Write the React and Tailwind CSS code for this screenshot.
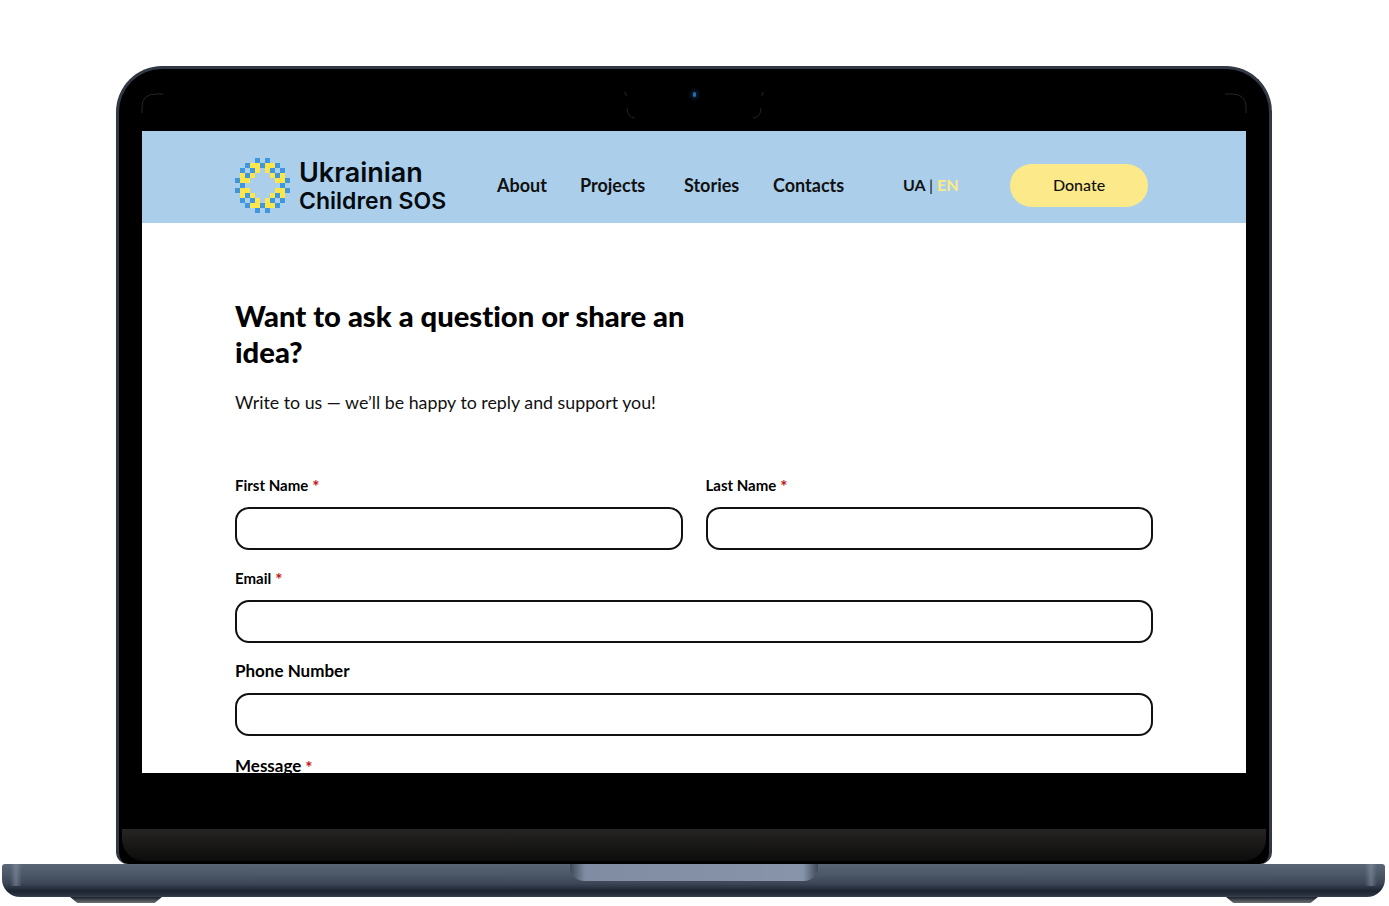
import React from "react";

// pixel logo: . empty, 1 blue, 2 yellow
const logoRows = [
  "....1.1....",
  "..1221221..",
  ".1.12.21.1.",
  ".212...212.",
  "122.....221",
  ".1.......1.",
  "122.....221",
  ".212...212.",
  ".1.12.21.1.",
  "..1221221..",
  "....1.1....",
];

const Logo = () => (
  <svg width="55" height="55" viewBox="0 0 55 55" className="shrink-0">
    {logoRows.map((row, y) =>
      row.split("").map((cell, x) =>
        cell === "." ? null : (
          <rect key={`${x}-${y}`} x={x * 5} y={y * 5} width="5" height="5" fill={cell === "1" ? "#3f97e0" : "#fde64b"} />
        )
      )
    )}
  </svg>
);

const Field = ({ label, required, labelClass = "text-[15px]", className = "" }) => (
  <div className={className}>
    <div className={`h-[22px] leading-[22px] font-bold text-black ${labelClass}`}>
      {label}
      {required && <span className="ml-[4px] align-[-2px] text-[17px] leading-none text-[#c01818]">*</span>}
    </div>
    <div className="mt-[11px] h-[43px] rounded-[14px] border-2 border-[#111] bg-white" />
  </div>
);

const Foot = () => (
  <div className="h-[6px] w-[92px] bg-gradient-to-b from-[#1b212b] via-[#454a52] to-[#6d7075] [clip-path:polygon(0_0,100%_0,92%_100%,8%_100%)]" />
);

// faint arcs on the black bezel
const BezelLines = () => (
  <svg width="1150" height="60" viewBox="0 0 1150 60" fill="none" className="absolute left-0 top-0">
    <path d="M23 44 V38 Q23 25 37 25 H44" stroke="#262626" />
    <path d="M1127 44 V38 Q1127 25 1113 25 H1106" stroke="#262626" />
    <path d="M505 24 H507 V27" stroke="#222" />
    <path d="M508 39 Q508 48 516 49" stroke="#222" />
    <path d="M645 24 H643 V27" stroke="#222" />
    <path d="M642 39 Q642 48 634 49" stroke="#222" />
  </svg>
);

export default function App() {
  return (
    <div className="h-[906px] w-[1389px] overflow-hidden bg-white pt-[66px] font-['Lato',sans-serif]">
      {/* lid */}
      <div className="relative ml-[116px] h-[798px] w-[1156px] overflow-hidden rounded-t-[46px] rounded-b-[12px] border-x-[3px] border-t-[3px] border-[#323945] bg-black pl-[23px] pt-[62px]">
        <BezelLines />
        <div className="absolute left-[574px] top-[23px] h-[5px] w-[3px] rounded-full bg-[#1f6fb5] shadow-[0_0_4px_2px_#0c2238]" />

        {/* screen */}
        <div className="relative z-10 h-[642px] w-[1104px] overflow-hidden bg-white">
          <header className="flex h-[92px] items-center bg-[#abcfeb] pl-[93px] pt-[16px]">
            <Logo />
            <div className="ml-[9px] w-[198px] pt-[4px] font-['Inter',sans-serif] font-semibold leading-[28px] text-[#050a0f]">
              <div className="text-[27px]">Ukrainian</div>
              <div className="text-[23px]">Children SOS</div>
            </div>
            <nav className="flex items-center text-[18px] font-bold text-[#111]">
              <span className="w-[83px]">About</span>
              <span className="w-[104px]">Projects</span>
              <span className="w-[89px]">Stories</span>
              <span className="w-[130px]">Contacts</span>
            </nav>
            <div className="w-[107px] text-[16px] font-bold text-[#111]">
              UA <span className="font-normal">|</span> <span className="text-[#fbe984]">EN</span>
            </div>
            <button className="h-[43px] w-[138px] rounded-[22px] bg-[#fbe98a] text-[16px] font-medium text-[#111]">Donate</button>
          </header>

          <main className="px-[93px] pt-[75px]">
            <h1 className="w-[480px] text-[29.2px] font-black leading-[36px] text-black [font-variant-ligatures:none]">Want to ask a question or share an idea?</h1>
            <p className="mt-[19px] text-[17.8px] leading-[26px] text-[#111]">Write to us — we’ll be happy to reply and support you!</p>
            <div className="mt-[59px] flex flex-col gap-[17px]">
              <div className="grid grid-cols-2 gap-x-[23px]">
                <Field label="First Name" required />
                <Field label="Last Name" required />
              </div>
              <Field label="Email" required />
              <Field label="Phone Number" labelClass="text-[17px]" />
              <Field label="Message" required labelClass="text-[17px]" className="mt-[2px]" />
            </div>
          </main>
        </div>

        {/* hinge band */}
        <div className="absolute inset-x-[3px] bottom-[3px] h-[32px] rounded-b-[22px] bg-gradient-to-b from-[#262523] to-[#0c0c0c]" />
      </div>

      {/* base */}
      <div className="relative ml-[2px] h-[33px] w-[1383px] overflow-hidden rounded-b-[18px] rounded-t-[3px] bg-[linear-gradient(#5a6675_0%,#4a5566_35%,#3b4556_60%,#1c2431_82%,#2a3240_94%,#3a4350_100%)]">
        <div className="absolute left-[8px] top-0 h-[22px] w-[12px] bg-gradient-to-r from-transparent via-[#8f9aab] to-transparent opacity-50" />
        <div className="absolute right-[8px] top-0 h-[22px] w-[12px] bg-gradient-to-r from-transparent via-[#8f9aab] to-transparent opacity-50" />
        <div className="mx-auto h-[17px] w-[248px] rounded-b-[14px] bg-[linear-gradient(90deg,#3f4858_0%,#7f8ca2_6%,#8794aa_94%,#3f4858_100%)]" />
      </div>
      <div className="ml-[70px] flex w-[1248px] justify-between">
        <Foot />
        <Foot />
      </div>
    </div>
  );
}
